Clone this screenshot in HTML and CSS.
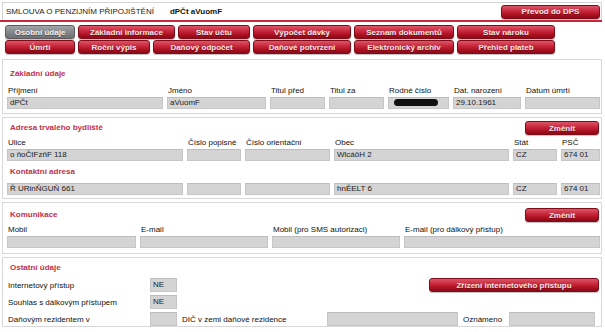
FILE: index.html
```html
<!DOCTYPE html>
<html lang="cs">
<head>
  <meta charset="UTF-8" />
  <title>Smlouva o penzijním připojištění</title>
  <link rel="stylesheet" href="styles.css">
</head>
<body>
  <div class="header">
    <span class="title">SMLOUVA O PENZIJNÍM PŘIPOJIŠTĚNÍ</span>
    <span class="client">dPČt aVuomF</span>
    <button class="btn btn-dps">Převod do DPS</button>
  </div>
  <div class="redline"></div>

  <div class="tabs">
    <div class="tabrow">
      <button class="btn tab active w70">Osobní údaje</button>
      <button class="btn tab w97">Základní informace</button>
      <button class="btn tab w72">Stav účtu</button>
      <button class="btn tab w98">Výpočet dávky</button>
      <button class="btn tab w100">Seznam dokumentů</button>
      <button class="btn tab w98">Stav nároku</button>
    </div>
    <div class="tabrow">
      <button class="btn tab w70">Úmrtí</button>
      <button class="btn tab w72">Roční výpis</button>
      <button class="btn tab w97">Daňový odpočet</button>
      <button class="btn tab w98">Daňové potvrzení</button>
      <button class="btn tab w100">Elektronický archiv</button>
      <button class="btn tab w98">Přehled plateb</button>
    </div>
  </div>

  <div class="panel panel-basic">
    <div class="heading">Základní údaje</div>
    <div class="fields cols-basic">
      <div class="lbl">Příjmení</div>
      <div class="lbl">Jméno</div>
      <div class="lbl">Titul před</div>
      <div class="lbl">Titul za</div>
      <div class="lbl">Rodné číslo</div>
      <div class="lbl">Dat. narození</div>
      <div class="lbl">Datum úmrtí</div>
      <div class="inp">dPČt</div>
      <div class="inp">aVuomF</div>
      <div class="inp"></div>
      <div class="inp"></div>
      <div class="inp"><span class="blot"></span></div>
      <div class="inp">29.10.1961</div>
      <div class="inp"></div>
    </div>
  </div>

  <div class="panel panel-address">
    <div class="headrow">
      <div class="heading">Adresa trvalého bydliště</div>
      <button class="btn btn-change">Změnit</button>
    </div>
    <div class="fields cols-address">
      <div class="lbl">Ulice</div>
      <div class="lbl">Číslo popisné</div>
      <div class="lbl">Číslo orientační</div>
      <div class="lbl">Obec</div>
      <div class="lbl">Stát</div>
      <div class="lbl">PSČ</div>
      <div class="inp">o ňoČtFzňF 118</div>
      <div class="inp"></div>
      <div class="inp"></div>
      <div class="inp">WlcáöH 2</div>
      <div class="inp">CZ</div>
      <div class="inp">674 01</div>
    </div>
    <div class="heading subheading">Kontaktní adresa</div>
    <div class="fields cols-address contact">
      <div class="inp">Ř URinŇGUŇ 661</div>
      <div class="inp"></div>
      <div class="inp"></div>
      <div class="inp">hnĚELT 6</div>
      <div class="inp">CZ</div>
      <div class="inp">674 01</div>
    </div>
  </div>

  <div class="panel panel-comm">
    <div class="headrow">
      <div class="heading">Komunikace</div>
      <button class="btn btn-change">Změnit</button>
    </div>
    <div class="fields cols-comm">
      <div class="lbl">Mobil</div>
      <div class="lbl">E-mail</div>
      <div class="lbl">Mobil (pro SMS autorizaci)</div>
      <div class="lbl">E-mail (pro dálkový přístup)</div>
      <div class="inp"></div>
      <div class="inp"></div>
      <div class="inp"></div>
      <div class="inp"></div>
    </div>
  </div>

  <div class="panel panel-other">
    <div class="heading">Ostatní údaje</div>
    <div class="orow">
      <div class="olbl">Internetový přístup</div>
      <div class="inp small">NE</div>
      <button class="btn btn-access">Zřízení internetového přístupu</button>
    </div>
    <div class="orow">
      <div class="olbl">Souhlas s dálkovým přístupem</div>
      <div class="inp small">NE</div>
    </div>
    <div class="orow">
      <div class="olbl">Daňovým rezidentem v</div>
      <div class="inp small"></div>
      <div class="olbl dic">DIČ v zemi daňové rezidence</div>
      <div class="inp dic-inp"></div>
      <div class="olbl notified">Oznámeno</div>
      <div class="inp notified-inp"></div>
    </div>
  </div>
</body>
</html>
```

FILE: styles.css
```css
body { margin: 0; background: #fff; color: #111; font-family: "Liberation Sans", Arial, sans-serif; font-size: 8px; }

.header { display: flex; align-items: center; height: 17px; margin: 2px 3px 0 2px; padding: 0 1px 0 3px; border: 1px solid #d4d4d4; border-bottom: none; }
.title { color: #222; }
.client { font-weight: bold; margin-left: 16px; }
.redline { height: 2px; background: #c8283e; margin-right: 3px; }

.btn { font-family: "Liberation Sans", Arial, sans-serif; font-size: 8px; font-weight: bold; color: #f8e8ea; text-shadow: 0 1px 0 rgba(60, 0, 8, 0.45); border: 1px solid #7e0c19; border-radius: 3px; padding: 0; cursor: pointer; background: linear-gradient(#dc5668 0%, #c62438 45%, #a8101f 75%, #8c0a18 100%); box-shadow: 0 1px 1px rgba(0, 0, 0, 0.25); }
.btn-dps { margin-left: auto; width: 99px; height: 14px; }

.tabs { display: flex; flex-direction: column; gap: 1px; margin-top: 3px; padding-left: 5px; }
.tabrow { display: flex; gap: 3px; }
.tab { height: 14px; }
.tab.active { background: linear-gradient(#a3a6a9 0%, #85888b 50%, #6d7073 100%); border-color: #5a5d60; color: #f2f2f2; }
.w70 { width: 70px; }
.w72 { width: 72px; }
.w97 { width: 97px; }
.w98 { width: 98px; }
.w100 { width: 100px; }

.panel { margin: 3px 3px 0 2px; padding: 0 1px 0 4px; border: 1px solid #d8d8d8; }
.panel-basic { margin-top: 5px; padding-bottom: 4px; }
.panel-address { padding-bottom: 3px; }
.panel-comm { padding-bottom: 5px; }

.heading { color: #c2304a; font-weight: bold; font-size: 8px; line-height: 14px; height: 14px; padding-left: 3px; }
.panel-basic > .heading { margin-top: 7px; }
.panel-other > .heading { margin-top: 3px; }
.subheading { margin-top: 4px; }

.headrow { display: flex; align-items: center; justify-content: space-between; height: 14px; margin-top: 3px; }
.panel-comm .headrow { margin-top: 5px; }
.btn-change { width: 74px; height: 14px; margin-right: 1px; }

.fields { display: grid; column-gap: 4px; margin-top: 4px; }
.headrow + .fields { margin-top: 2px; }
.fields.contact { margin-top: 4px; }
.cols-basic { grid-template-columns: 156px 99px 55px 55px 61px 68px 75px; }
.cols-address { grid-template-columns: 176px 54px 85px 175px 44px 39px; }
.cols-comm { grid-template-columns: 129px 128px 128px 196px; }

.lbl { line-height: 12px; height: 12px; padding-left: 1px; white-space: nowrap; }
.inp { box-sizing: border-box; height: 12px; line-height: 10px; padding-left: 2px; background: #d4d4d4; border: 1px solid #c6c6c6; border-top-color: #bdbdbd; color: #222; white-space: nowrap; overflow: hidden; }
.blot { display: inline-block; width: 44px; height: 7px; margin: 1px 0 0 3px; border-radius: 4px; background: #111; }

.orow { display: flex; align-items: center; height: 14px; margin-top: 3px; }
.orow + .orow { margin-top: 3px; }
.olbl { width: 142px; padding-left: 1px; white-space: nowrap; }
.inp.small { width: 27px; height: 14px; line-height: 12px; }
.btn-access { margin-left: auto; width: 170px; height: 14px; margin-right: 1px; }
.olbl.dic { width: 145px; margin-left: 4px; }
.dic-inp { width: 131px; height: 14px; }
.olbl.notified { width: 46px; margin-left: 4px; }
.notified-inp { width: 86px; height: 14px; }
```
